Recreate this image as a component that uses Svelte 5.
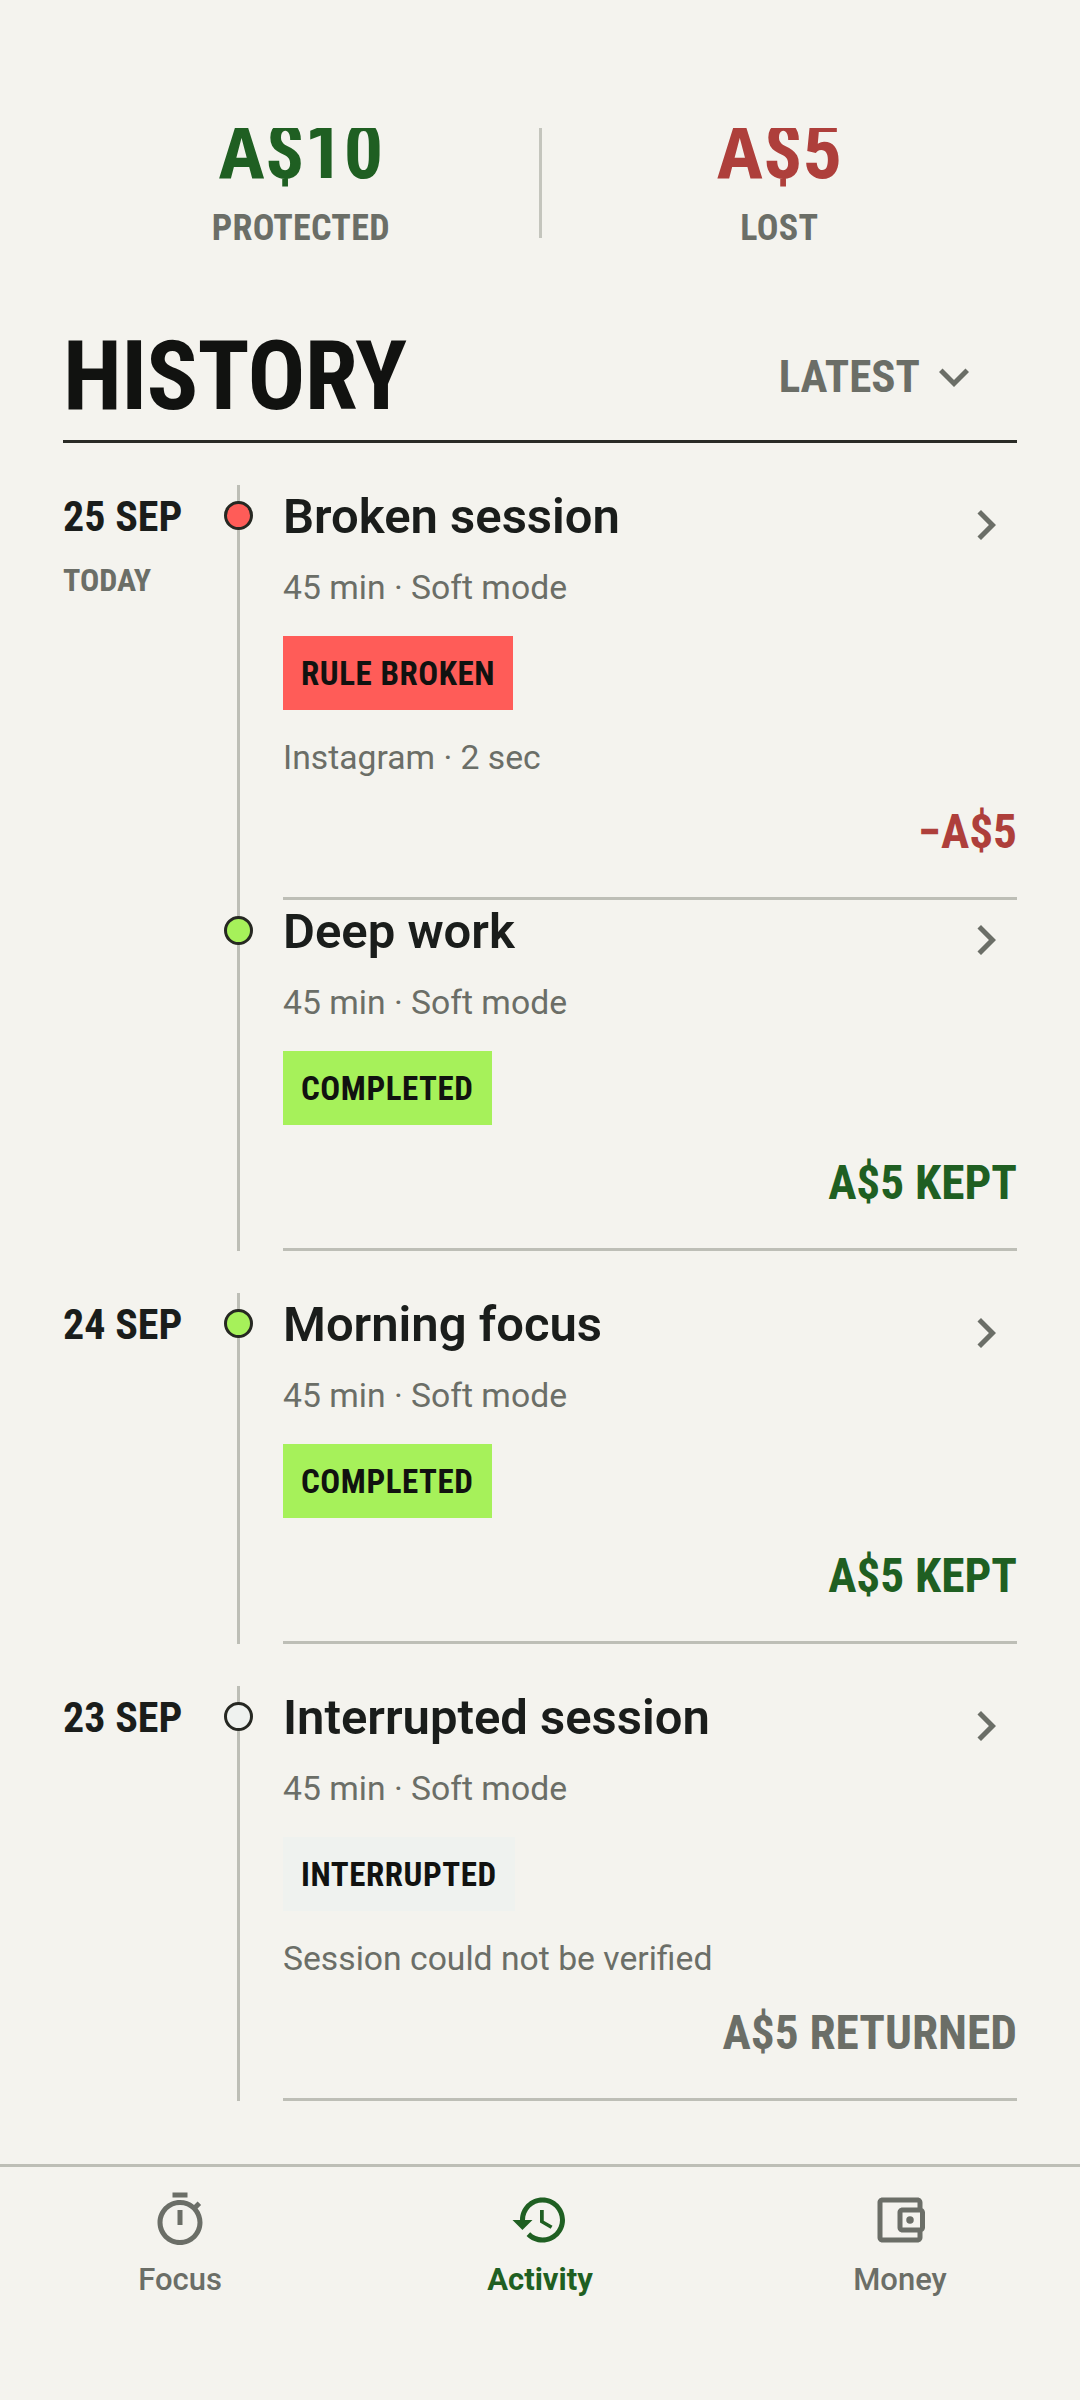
<script>
  const groups = [
    { date: '25 SEP', sub: 'TODAY', rows: [
      { title: 'Broken session', status: 'broken', badge: 'RULE BROKEN', note: 'Instagram · 2 sec', amount: '−A$5', tone: 'loss' },
      { title: 'Deep work', status: 'done', badge: 'COMPLETED', amount: 'A$5 KEPT', tone: 'kept' }
    ]},
    { date: '24 SEP', rows: [
      { title: 'Morning focus', status: 'done', badge: 'COMPLETED', amount: 'A$5 KEPT', tone: 'kept' }
    ]},
    { date: '23 SEP', rows: [
      { title: 'Interrupted session', status: 'off', badge: 'INTERRUPTED', note: 'Session could not be verified', amount: 'A$5 RETURNED', tone: 'back' }
    ]}
  ];
</script>

<div class="page">
  <main>
    <section class="hero">
      <div class="stat">
        <div class="clip"><div class="big kept">A$10</div></div>
        <div class="label">PROTECTED</div>
      </div>
      <div class="split"></div>
      <div class="stat">
        <div class="clip"><div class="big loss">A$5</div></div>
        <div class="label">LOST</div>
      </div>
    </section>

    <header class="head">
      <h1>HISTORY</h1>
      <div class="sort">
        <span>LATEST</span>
        <svg viewBox="0 0 24 24" width="60" height="60"><path d="M16.59 8.59L12 13.17 7.41 8.59 6 10l6 6 6-6z"/></svg>
      </div>
    </header>

    {#each groups as g}
      <section class="group">
        <div class="when">
          <div class="date">{g.date}</div>
          {#if g.sub}<div class="sub">{g.sub}</div>{/if}
        </div>
        <div class="rows">
          {#each g.rows as r}
            <article class="row">
              <span class="dot {r.status}"></span>
              <div class="top">
                <h2>{r.title}</h2>
                <svg class="chev" viewBox="0 0 24 24" width="60" height="60"><path d="M10 6L8.59 7.41 13.17 12l-4.58 4.59L10 18l6-6z"/></svg>
              </div>
              <div class="meta">45 min · Soft mode</div>
              <div class="badge {r.status}">{r.badge}</div>
              {#if r.note}<div class="note">{r.note}</div>{/if}
              <div class="amount {r.tone}">{r.amount}</div>
            </article>
          {/each}
        </div>
      </section>
    {/each}
  </main>

  <nav>
    <div class="tab">
      <svg viewBox="0 0 24 24" width="60" height="60"><path d="M15 1H9v2h6V1zm-4 13h2V8h-2v6zm8.03-6.61l1.42-1.42c-.43-.51-.9-.99-1.41-1.41l-1.42 1.42C16.07 4.74 14.12 4 12 4c-4.97 0-9 4.03-9 9s4.02 9 9 9 9-4.03 9-9c0-2.12-.74-4.07-1.97-5.61zM12 20c-3.87 0-7-3.13-7-7s3.13-7 7-7 7 3.13 7 7-3.13 7-7 7z"/></svg>
      <span>Focus</span>
    </div>
    <div class="tab on">
      <svg viewBox="0 0 24 24" width="60" height="60"><path d="M13 3c-4.97 0-9 4.03-9 9H1l3.89 3.89.07.14L9 12H6c0-3.87 3.13-7 7-7s7 3.13 7 7-3.13 7-7 7c-1.93 0-3.68-.79-4.94-2.06l-1.42 1.42C8.27 19.99 10.51 21 13 21c4.97 0 9-4.03 9-9s-4.03-9-9-9zm-1 5v5l4.28 2.54.72-1.21-3.5-2.08V8H12z"/></svg>
      <span>Activity</span>
    </div>
    <div class="tab">
      <svg viewBox="0 0 24 24" width="60" height="60"><path d="M21 7.28V5c0-1.1-.9-2-2-2H5c-1.11 0-2 .9-2 2v14c0 1.1.89 2 2 2h14c1.1 0 2-.9 2-2v-2.28c.59-.35 1-.98 1-1.72V9c0-.74-.41-1.38-1-1.72zM20 9v6h-7V9h7zM5 19V5h14v2h-6c-1.1 0-2 .9-2 2v6c0 1.1.9 2 2 2h6v2H5z"/><circle cx="16" cy="12" r="1.5"/></svg>
      <span>Money</span>
    </div>
  </nav>
</div>

<style>
  :global(body) { margin: 0; background: #f4f3ee; }
  .page {
    min-height: 2400px;
    display: flex;
    flex-direction: column;
    background: #f4f3ee;
    color: #111210;
    font-family: Roboto, "Noto Sans", sans-serif;
  }
  main { flex: 1; padding: 128px 63px 0; }
  svg { display: block; fill: currentColor; }

  .hero { display: flex; align-items: flex-start; height: 123px; }
  .stat { flex: 1; text-align: center; }
  .split { width: 3px; height: 110px; background: #c4c5bd; }
  .clip { height: 66px; overflow: hidden; }
  .big {
    font-size: 78px; line-height: 47px; font-weight: 700; font-stretch: 75%;
  }
  .label {
    font-size: 36px; line-height: 46px; font-weight: 700; font-stretch: 75%; color: #6b6e67; margin-top: 11px;
    letter-spacing: .3px;
  }
  .kept { color: #1f5f22; }
  .loss { color: #ae3f3b; }
  .back { color: #6b6e67; }

  .head {
    display: flex; justify-content: space-between; align-items: center;
    margin-top: 68px; padding-bottom: 9px; border-bottom: 3px solid #2a2b26;
  }
  h1 { margin: 0; padding-top: 3px; font-size: 96px; line-height: 109px; font-weight: 700; font-stretch: 75%; letter-spacing: -.7px; }
  .sort {
    display: flex; align-items: center; gap: 4px; padding: 3px 33px 0 0;
    color: #6b6e67; font-size: 45px; font-weight: 700; font-stretch: 75%;
  }

  .group { display: grid; grid-template-columns: 174px 1fr; margin-top: 42px; }
  .when { padding-top: 9px; }
  .date { font-size: 42px; line-height: 46px; font-weight: 700; font-stretch: 75%; color: #1a1d1b; }
  .sub { font-size: 32px; line-height: 40px; font-weight: 700; font-stretch: 75%; color: #6b6e67; margin-top: 20px; }
  .rows { border-left: 3px solid #bdbeb6; padding-left: 43px; }

  .row { position: relative; padding-bottom: 41px; border-bottom: 3px solid #bdbeb6; }
  .dot {
    position: absolute; left: -59px; top: 16px; box-sizing: border-box;
    width: 29px; height: 29px; border-radius: 50%; border: 3px solid #262822;
  }
  .dot.broken { background: #ff5c58; }
  .dot.done { background: #a6f15a; }
  .dot.off { background: #eff2ef; }

  .top { display: flex; justify-content: space-between; height: 60px; }
  h2 { margin: 2px 0 0; font-size: 49px; line-height: 60px; font-weight: 600; color: #1a1d1b; }
  .chev { color: #6b6e67; margin-top: 10px; margin-right: 1px; }
  .meta, .note { font-size: 33.7px; line-height: 45px; color: #6b6e67; }
  .meta { margin-top: 20px; }
  .badge {
    width: fit-content; height: 74px; line-height: 75px; padding: 0 18px; margin-top: 26px;
    font-size: 33px; letter-spacing: .55px; font-weight: 700; font-stretch: 75%; color: #111210;
  }
  .badge.broken { background: #ff5c58; }
  .badge.done { background: #a6f15a; }
  .badge.off { background: #eff2ef; }
  .note { margin-top: 25px; }
  .amount {
    margin-top: 34px; text-align: right;
    font-size: 47.3px; line-height: 48px; font-weight: 700; font-stretch: 75%;
  }
  .note + .amount { margin-top: 28px; }

  nav {
    display: grid; grid-template-columns: repeat(3, 1fr);
    height: 233px; border-top: 3px solid #bdbeb6;
  }
  .tab {
    display: flex; flex-direction: column; align-items: center;
    padding-top: 23px; color: #6b6e67; font-size: 31px; line-height: 44px; font-weight: 500;
  }
  .tab span { margin-top: 8px; }
  .tab.on { color: #1f5f22; font-weight: 700; }
</style>
